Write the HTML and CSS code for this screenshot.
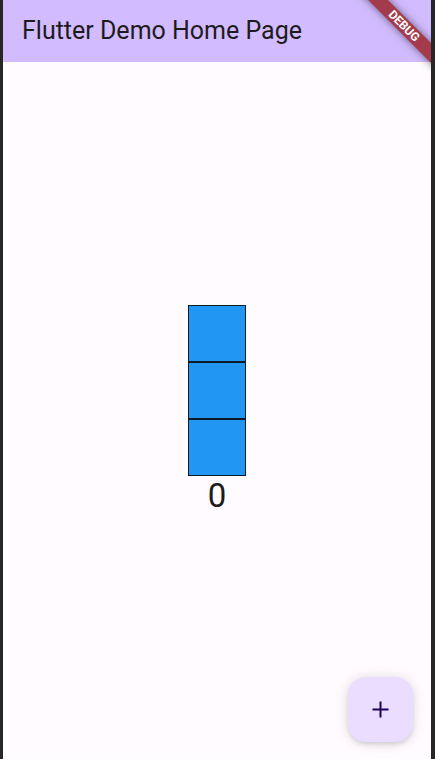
FILE: index.html
```html
<!DOCTYPE html>
<html lang="en">
<head>
<meta charset="utf-8">
<meta name="viewport" content="width=device-width, initial-scale=1">
<title>Flutter Demo Home Page</title>
<link rel="stylesheet" href="styles.css">
</head>
<body>
<div class="screen">
  <header class="app-bar">
    <h1 class="app-bar-title">Flutter Demo Home Page</h1>
  </header>
  <main class="content">
    <div class="stack">
      <div class="box"></div>
      <div class="box"></div>
      <div class="box"></div>
    </div>
    <p class="counter">0</p>
  </main>
  <button class="fab" type="button" aria-label="Increment">
    <svg class="fab-icon" viewBox="0 0 27 27" aria-hidden="true"><path d="M12.5 5.5h2v7h7v2h-7v7h-2v-7h-7v-2h7z"/></svg>
  </button>
  <div class="debug-corner"><span class="debug-banner">DEBUG</span></div>
</div>
</body>
</html>
```
FILE: styles.css
```css
* {
  box-sizing: border-box;
}

body {
  margin: 0;
  background: #262626;
  font-family: Roboto, "Liberation Sans", sans-serif;
  color: #1d1b20;
}

.screen {
  position: relative;
  display: flex;
  flex-direction: column;
  min-height: 100vh;
  margin: 0 4px 0 3px;
  background: #fffbff;
}

.app-bar {
  display: flex;
  align-items: center;
  padding: 14px 19px;
  background: #d2bcff;
}

.app-bar-title {
  margin: 0;
  font-size: 25px;
  font-weight: 400;
  line-height: 34px;
}

.content {
  flex: 1;
  display: flex;
  flex-direction: column;
  align-items: center;
  justify-content: center;
}

.stack {
  display: flex;
  flex-direction: column;
}

.box {
  width: 58px;
  height: 57px;
  border: 1px solid #0b1a28;
  background: #2196f3;
}

.counter {
  margin: 0;
  font-size: 33px;
  line-height: 40px;
}

.fab {
  position: absolute;
  right: 18px;
  bottom: 17px;
  display: flex;
  align-items: center;
  justify-content: center;
  width: 65px;
  height: 65px;
  padding: 0;
  border: 0;
  border-radius: 18px;
  background: #eaddff;
  color: #21005d;
  box-shadow: 0 3px 5px -1px rgba(0, 0, 0, 0.12), 0 1px 14px rgba(0, 0, 0, 0.14);
}

.fab-icon {
  width: 27px;
  height: 27px;
  fill: currentColor;
}

.debug-corner {
  position: absolute;
  top: 0;
  right: 0;
  width: 80px;
  height: 80px;
  overflow: hidden;
  pointer-events: none;
}

.debug-banner {
  position: absolute;
  top: 19px;
  right: -33px;
  width: 120px;
  background: #a43b4c;
  box-shadow: 0 0 8px rgba(0, 0, 0, 0.5);
  color: #ffffff;
  font-size: 12px;
  font-weight: 700;
  line-height: 14px;
  text-align: center;
  transform: rotate(45deg);
}
```
